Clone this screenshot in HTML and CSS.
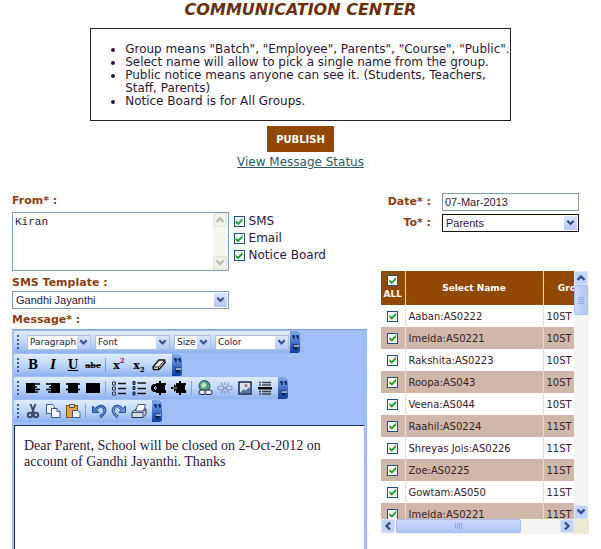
FILE: index.html
```html
<!DOCTYPE html>
<html lang="en">
<head>
<meta charset="utf-8">
<title>Communication Center</title>
<link rel="stylesheet" href="styles.css">
</head>
<body>
<svg class="defs" aria-hidden="true">
  <symbol id="down" viewBox="0 0 10 8"><path d="M1.5 1.5 5 5l3.5-3.5" fill="none" stroke="currentColor" stroke-width="2.4"/></symbol>
  <symbol id="up" viewBox="0 0 10 8"><path d="M1.5 6 5 2.500l3.500 3.500" fill="none" stroke="currentColor" stroke-width="2.400"/></symbol>
  <symbol id="left" viewBox="0 0 8 10"><path d="M6 1.500 2.500 5 6 8.500" fill="none" stroke="currentColor" stroke-width="2.400"/></symbol>
  <symbol id="right" viewBox="0 0 8 10"><path d="M2 1.500 5.500 5 2 8.500" fill="none" stroke="currentColor" stroke-width="2.400"/></symbol>
  <symbol id="more" viewBox="0 0 10 22"><path d="M2 5h2v2H3M6 5h2v2H7" fill="none" stroke="#061f5c" stroke-width="1.500"/><path d="M3 14h5M3 16.500h5L5.500 19Z" fill="#071d50" stroke="#071d50"/><path d="M4 15h5" stroke="#fff"/></symbol>
</svg>
<header class="top">
  <h1>COMMUNICATION CENTER</h1>
  <div class="notes">
    <ul>
      <li>Group means "Batch", "Employee", Parents", "Course", "Public".</li>
      <li>Select name will allow to pick a single name from the group.</li>
      <li>Public notice means anyone can see it. (Students, Teachers, Staff, Parents)</li>
      <li>Notice Board is for All Groups.</li>
    </ul>
  </div>
  <button class="publish" type="submit" form="message-form">PUBLISH</button>
  <a class="status" href="#status">View Message Status</a>
</header>

<form class="form" id="message-form">
  <section class="compose">
    <label class="label" for="from">From* :</label>
    <div class="from-row">
      <div class="from-box">
        <textarea id="from">Kiran</textarea>
        <div class="bar-v pale">
          <button type="button" aria-label="Scroll up"><svg><use href="#up"/></svg></button>
          <button type="button" aria-label="Scroll down"><svg><use href="#down"/></svg></button>
        </div>
      </div>
      <div class="channels">
        <label><input type="checkbox" checked>SMS</label>
        <label><input type="checkbox" checked>Email</label>
        <label><input type="checkbox" checked>Notice Board</label>
      </div>
    </div>
    <label class="label" for="template">SMS Template :</label>
    <div class="pick template">
      <select id="template"><option>Gandhi Jayanthi</option></select>
      <svg><use href="#down"/></svg>
    </div>
    <label class="label" for="message">Message* :</label>
    <div class="editor">
      <div class="toolbar">
        <span class="grip"></span>
        <div class="formats">
          <div class="pick small w-paragraph"><select aria-label="Paragraph"><option>Paragraph</option></select><svg><use href="#down"/></svg></div>
          <div class="pick small w-font"><select aria-label="Font"><option>Font</option></select><svg><use href="#down"/></svg></div>
          <div class="pick small w-size"><select aria-label="Size"><option>Size</option></select><svg><use href="#down"/></svg></div>
          <div class="pick small w-color"><select aria-label="Color"><option>Color</option></select><svg><use href="#down"/></svg></div>
        </div>
        <button class="more" type="button" aria-label="More formats"><svg><use href="#more"/></svg></button>
      </div>
      <div class="toolbar">
        <span class="grip"></span>
        <button class="tool glyph" type="button"><b>B</b></button>
        <button class="tool glyph" type="button"><b><i>I</i></b></button>
        <button class="tool glyph" type="button"><b><u>U</u></b></button>
        <button class="tool glyph strike" type="button"><s>abc</s></button>
        <span class="sep"></span>
        <button class="tool glyph script" type="button">x<sup>2</sup></button>
        <button class="tool glyph script" type="button">x<sub>2</sub></button>
        <button class="tool" type="button" aria-label="Remove formatting"><svg viewBox="0 0 16 16"><path d="M2 10 8 3h5.500l.5 2.500-6 7H2.500Z" fill="#fff" stroke="#111" stroke-width="1.400"/><path d="M2 10h5.500L14 3M7.500 10v2.500" fill="none" stroke="#111"/></svg></button>
        <button class="more" type="button" aria-label="More styles"><svg><use href="#more"/></svg></button>
      </div>
      <div class="toolbar">
        <span class="grip"></span>
        <button class="tool" type="button" aria-label="Align left"><svg viewBox="0 0 16 16"><path d="M1 3h9v10H1Z"/><path d="M1 4h14M1 7h11M1 9.500h14M1 12h12" stroke="#000" stroke-width="1.500"/></svg></button>
        <button class="tool" type="button" aria-label="Align right"><svg viewBox="0 0 16 16"><path d="M6 3h9v10H6Z"/><path d="M1 4h14M4 7h11M1 9.500h14M3 12h12" stroke="#000" stroke-width="1.500"/></svg></button>
        <button class="tool" type="button" aria-label="Center"><svg viewBox="0 0 16 16"><path d="M3 3h10v10H3Z"/><path d="M1 4h14M3 7h10M1 9.500h14M3 12h10" stroke="#000" stroke-width="1.500"/></svg></button>
        <button class="tool" type="button" aria-label="Justify"><svg viewBox="0 0 16 16"><path d="M1 3h14v10H1Z"/></svg></button>
        <span class="sep"></span>
        <button class="tool" type="button" aria-label="Numbered list"><svg viewBox="0 0 16 16"><path d="M7 3.500h8M7 8.500h8M7 13.500h8" stroke="#111" stroke-width="1.600"/><path d="M1.500 2h3v3h-3ZM1.500 7h3v3h-3ZM1.500 12h3v3h-3Z" fill="#cfe0fb" stroke="#234"/></svg></button>
        <button class="tool" type="button" aria-label="Bulleted list"><svg viewBox="0 0 16 16"><path d="M6.500 3h8.500M6.500 8.500h8.500M6.500 13.500h8.500" stroke="#111" stroke-width="1.600"/><path d="M2 1.500h2v3H2ZM2 6.500h2v3H2ZM2 12h2v3H2Z" fill="#789" stroke="#123"/></svg></button>
        <button class="tool" type="button" aria-label="Outdent"><svg viewBox="0 0 16 16"><path d="M5 3h3V1h2v2h5v2h-1v5h1v3h-5v2H8v-2H5Z"/><circle cx="4" cy="8" r="4"/><path d="m5 6-2 2 2 2M3 8h3" fill="none" stroke="#b8cff5"/></svg></button>
        <button class="tool" type="button" aria-label="Indent"><svg viewBox="0 0 16 16"><path d="M5 3h3V1h2v2h5v2h-1v5h1v3h-5v2H8v-2H5Z"/><path d="M0 7h3V4l4 4-4 4V9H0Z"/><path d="M2 8h4" stroke="#b8cff5"/></svg></button>
        <span class="sep"></span>
        <button class="tool" type="button" aria-label="Insert link"><svg viewBox="0 0 16 16"><circle cx="7.500" cy="6" r="5.500" fill="#4e9f86" stroke="#31505e"/><path d="M4 4q3-3 5 0T5 8Z" fill="#c1e8bd"/><rect x="2" y="10" width="7" height="4.500" rx="2" fill="#dce7f5" stroke="#223"/><rect x="8" y="10" width="7" height="4.500" rx="2" fill="#dce7f5" stroke="#223"/></svg></button>
        <button class="tool" type="button" aria-label="Remove link"><svg viewBox="0 0 16 16" fill="none" stroke="#8096bb" stroke-width="1.200"><rect x="1" y="6" width="6" height="4" rx="2"/><rect x="9" y="6" width="6" height="4" rx="2"/><path d="M6 8h4M4 3l2 2M8 2v3M12 3l-2 2M4 13l2-2M8 14v-3M12 13l-2-2"/></svg></button>
        <button class="tool" type="button" aria-label="Insert image"><svg viewBox="0 0 16 16"><path d="M2 2h12v12H2Z" fill="#d6e0f3" stroke="#172747" stroke-width="1.500"/><path d="m3 13 3.500-4 2 1.500L12 7l1 2v4Z" fill="#5873a4"/><circle cx="9" cy="5.500" r="1.500" fill="#b06b70"/></svg></button>
        <button class="tool" type="button" aria-label="Insert rule"><svg viewBox="0 0 16 16"><path d="M2 2.500h2M5 2.500h9M2 5h2M5 5h9M2 11.500h2M5 11.500h9M2 14h2M5 14h9" stroke="#444" stroke-width="1.300"/><path d="M1 7h14v2.500H1Z"/></svg></button>
        <button class="more" type="button" aria-label="More layout"><svg><use href="#more"/></svg></button>
      </div>
      <div class="toolbar">
        <span class="grip"></span>
        <button class="tool" type="button" aria-label="Cut"><svg viewBox="0 0 16 16" fill="none" stroke="#3b4a66" stroke-width="2"><path d="m5.500 1 3.500 9M10.500 1 7 10"/><circle cx="5" cy="12" r="2.200"/><circle cx="11" cy="12" r="2.200"/></svg></button>
        <button class="tool" type="button" aria-label="Copy"><svg viewBox="0 0 16 16" fill="#f5f9ff" stroke="#3a5899"><path d="M1.500 1.500h6l2 2v7h-8Z"/><path d="M6.500 5.500h5.500l3 3v6H6.500Z"/><path d="M12 5.500v3h3"/></svg></button>
        <button class="tool" type="button" aria-label="Paste"><svg viewBox="0 0 16 16"><rect x="1.500" y="2.500" width="11" height="12" fill="#e4a43c" stroke="#76501c"/><path d="M4.500 1.500h5v3h-5Z" fill="#c9d0d9" stroke="#5f5137"/><path d="M7.500 7.500h5l2.500 2v5H7.500Z" fill="#fff" stroke="#3a5899"/></svg></button>
        <span class="sep"></span>
        <button class="tool" type="button" aria-label="Undo"><svg viewBox="0 0 16 16"><path d="M5 6q5-5 8-1t-4 9" fill="none" stroke="#234a9b" stroke-width="3"/><path d="M5 6q5-4 8-1t-4 9" fill="none" stroke="#7ba4ea"/><path d="M1.500 3v6.500H8Z" fill="#4c7bd0" stroke="#234a9b"/></svg></button>
        <button class="tool" type="button" aria-label="Redo"><svg viewBox="0 0 16 16"><path d="M11 6Q6 1 3 5t4 9" fill="none" stroke="#234a9b" stroke-width="3"/><path d="M11 6Q6 2 3 5t4 9" fill="none" stroke="#a6c5f5"/><path d="M14.500 3v6.500H8Z" fill="#6e98df" stroke="#234a9b"/></svg></button>
        <button class="tool" type="button" aria-label="Print"><svg viewBox="0 0 16 16"><path d="m1 9 4-3h10v5l-3 3.500H1Z" fill="#d3d9e5" stroke="#26334e"/><path d="m4.500 8 2.500-6.500h7.500L12.500 8Z" fill="#fff" stroke="#42557c"/><path d="M1 9.500h11L15 6M12 9.500v5" fill="none" stroke="#42557c"/></svg></button>
        <button class="more" type="button" aria-label="More editing"><svg><use href="#more"/></svg></button>
      </div>
      <textarea class="message" id="message">Dear Parent, School will be closed on 2-Oct-2012 on account of Gandhi Jayanthi. Thanks</textarea>
    </div>
  </section>

  <section class="recipients">
    <div class="fields">
      <label class="label" for="date">Date* :</label>
      <input class="date" id="date" type="text" value="07-Mar-2013">
      <label class="label" for="to">To* :</label>
      <div class="pick focus"><select id="to"><option>Parents</option></select><svg><use href="#down"/></svg></div>
    </div>
    <div class="list">
      <div class="view">
        <table>
          <thead><tr><th class="c-check"><label><input type="checkbox" checked>ALL</label></th><th class="c-name">Select Name</th><th class="c-group">Group</th></tr></thead>
          <tbody>
            <tr><td><input type="checkbox" checked aria-label="Aaban"></td><td>Aaban:AS0222</td><td>10ST</td></tr>
            <tr><td><input type="checkbox" checked aria-label="Imelda"></td><td>Imelda:AS0221</td><td>10ST</td></tr>
            <tr><td><input type="checkbox" checked aria-label="Rakshita"></td><td>Rakshita:AS0223</td><td>10ST</td></tr>
            <tr><td><input type="checkbox" checked aria-label="Roopa"></td><td>Roopa:AS043</td><td>10ST</td></tr>
            <tr><td><input type="checkbox" checked aria-label="Veena"></td><td>Veena:AS044</td><td>10ST</td></tr>
            <tr><td><input type="checkbox" checked aria-label="Raahil"></td><td>Raahil:AS0224</td><td>11ST</td></tr>
            <tr><td><input type="checkbox" checked aria-label="Shreyas Jois"></td><td>Shreyas Jois:AS0226</td><td>11ST</td></tr>
            <tr><td><input type="checkbox" checked aria-label="Zoe"></td><td>Zoe:AS0225</td><td>11ST</td></tr>
            <tr><td><input type="checkbox" checked aria-label="Gowtam"></td><td>Gowtam:AS050</td><td>11ST</td></tr>
            <tr><td><input type="checkbox" checked aria-label="Imelda"></td><td>Imelda:AS0221</td><td>11ST</td></tr>
          </tbody>
        </table>
      </div>
      <div class="bar-v">
        <button type="button" aria-label="Scroll up"><svg><use href="#up"/></svg></button>
        <span class="thumb"></span>
        <button class="end" type="button" aria-label="Scroll down"><svg><use href="#down"/></svg></button>
      </div>
      <div class="bar-h">
        <button type="button" aria-label="Scroll left"><svg><use href="#left"/></svg></button>
        <span class="thumb"></span>
        <button class="end" type="button" aria-label="Scroll right"><svg><use href="#right"/></svg></button>
      </div>
      <span class="corner"></span>
    </div>
  </section>
</form>
</body>
</html>
```
FILE: styles.css
```css
* { box-sizing: border-box; }

body {
  margin: 0;
  height: 100vh;
  min-height: 540px;
  display: flex;
  flex-direction: column;
  overflow: hidden;
  background: #fff;
  color: #2a1838;
  font-family: Verdana, "DejaVu Sans", sans-serif;
  font-size: 12px;
  line-height: 13px;
}

button, input, select, textarea { margin: 0; border-radius: 0; font: inherit; color: inherit; }
button { padding: 0; border: 0; background: none; }
.defs { display: none; }

/* Header */
.top { display: flex; flex-direction: column; align-items: center; }
h1 {
  margin: 0;
  padding-bottom: 8px;
  color: #693008;
  font-size: 16px;
  font-style: italic;
  line-height: 20px;
}
.notes { width: 70%; padding: 14px 0 12px; border: 1px solid #222; }
.notes ul { margin: 0; padding-left: 34px; }
.publish {
  margin: 5px 0 4px;
  padding: 0 9px;
  height: 26px;
  background: #914800;
  color: #fff;
  font-size: 10px;
  font-weight: bold;
}
.status { color: #2f5a66; line-height: 13px; }

/* Form */
.form {
  flex: 1;
  min-height: 0;
  display: grid;
  grid-template-columns: 355fr 208fr;
  column-gap: 14px;
  padding: 24px 12px 0;
}
.compose { display: flex; flex-direction: column; min-height: 0; padding-top: 1px; }
.label { color: #8b4012; font-size: 11px; font-weight: bold; line-height: 14px; }
.from-row { display: flex; gap: 5px; margin: 4px 0 5px; }
.from-box { display: flex; width: 61%; height: 59px; border: 1px solid #7f9db9; }
.from-box textarea {
  flex: 1;
  min-width: 0;
  padding: 3px 2px;
  border: 0;
  outline: 0;
  resize: none;
  overflow: hidden;
  font-family: "Liberation Mono", monospace;
  font-size: 11px;
}
.channels { display: flex; flex-direction: column; gap: 4px; padding-top: 3px; }
.channels label { display: flex; align-items: center; gap: 4px; }

input[type="checkbox"] {
  appearance: none;
  flex: none;
  display: block;
  width: 11px;
  height: 11px;
  border: 1px solid #1c5180;
  background: #fff;
}
input[type="checkbox"]:checked::before {
  content: "";
  display: block;
  height: 9px;
  background: #21a121;
  clip-path: polygon(12% 40%, 40% 62%, 88% 12%, 88% 42%, 40% 92%, 12% 68%);
}

/* Drop-downs: the arrow lies over the select's right end */
.pick { position: relative; height: 18px; border: 1px solid #7f9db9; background: #fff; }
.pick select {
  display: block;
  appearance: none;
  width: 100%;
  height: 100%;
  padding: 0 16px 0 3px;
  border: 0;
  outline: 0;
  background: none;
  font-family: "Liberation Sans", sans-serif;
  font-size: 11px;
}
.pick svg {
  position: absolute;
  top: 1px;
  right: 1px;
  width: 13px;
  height: calc(100% - 2px);
  padding: 2px;
  background: linear-gradient(#dbe6fe, #b3c8f8);
  color: #34518a;
  pointer-events: none;
}
.template { width: 61%; margin: 1px 0 4px; }
.focus { border-color: #111; }

/* Editor */
.editor {
  flex: 1;
  min-height: 0;
  display: flex;
  flex-direction: column;
  align-items: flex-start;
  gap: 1px;
  margin-top: 2px;
  padding: 1px 3px 0 2px;
  border-top: 1px solid #7fa2dc;
  background: #9ebef5;
}
.toolbar {
  display: flex;
  align-items: center;
  height: 22px;
  border-radius: 2px 0 0 2px;
  background: linear-gradient(#dfecff, #c0d7fa 50%, #8eb2ef);
}
.grip { width: 2px; height: 14px; margin: 0 4px 0 3px; background: repeating-linear-gradient(#3a5a99 0 2px, transparent 2px 4px); }
.formats { display: flex; gap: 4px; padding: 0 1px 0 4px; }
.small { height: 15px; border-color: #aebfd9; }
.small select { padding: 0 12px 0 2px; font-family: Verdana, "DejaVu Sans", sans-serif; font-size: 9px; line-height: 13px; }
.small svg { top: 0; right: 0; height: 100%; }
.w-paragraph { width: 64px; }
.w-font { width: 75px; }
.w-size { width: 37px; }
.w-color { width: 74px; }
.tool { display: flex; align-items: center; justify-content: center; width: 20px; height: 22px; }
.tool svg { width: 16px; height: 16px; }
.glyph { color: #000; font-family: "DejaVu Serif", serif; font-size: 12px; font-weight: bold; }
.strike { font-size: 8px; }
.script { font-size: 11px; }
.script sup, .script sub { font-size: 7px; line-height: 7px; }
.script sup { align-self: flex-start; padding-top: 3px; color: #a01830; }
.script sub { align-self: flex-end; padding-bottom: 3px; }
.sep { width: 1px; height: 14px; margin: 0 3px 0 2px; background: #7f9fd8; }
.more { width: 10px; height: 22px; margin-left: 3px; border-radius: 0 3px 3px 0; background: linear-gradient(#81a9ee, #3c69c0 60%, #0d3c98); }
.more:first-of-type { margin-left: 0; }
.more svg { display: block; width: 10px; height: 22px; }
.message {
  flex: 1;
  align-self: stretch;
  min-height: 0;
  margin-top: 2px;
  padding: 12px 9px;
  border: solid #1d2b4d;
  border-width: 1px 0 0 1px;
  outline: 0;
  resize: none;
  overflow: hidden;
  font-family: "Liberation Serif", serif;
  font-size: 14px;
  line-height: 16px;
}

/* Recipients */
.fields {
  display: grid;
  grid-template-columns: 50px minmax(0, 1fr);
  gap: 3px 11px;
  align-items: center;
  padding-right: 10px;
  text-align: right;
}
.date {
  width: 100%;
  height: 18px;
  padding: 0 2px;
  border: 1px solid #7f9db9;
  font-family: "Liberation Sans", sans-serif;
  font-size: 11px;
}
.list {
  display: grid;
  grid-template-columns: minmax(0, 1fr) 15px;
  grid-template-rows: 248px 15px;
  margin-top: 39px;
}
.view { overflow: hidden; }
table { width: 222px; table-layout: fixed; border-collapse: collapse; font-size: 10px; color: #35222a; }
th { height: 34px; padding: 0; background: #914800; color: #fff; font-size: 9px; }
th label { display: flex; flex-direction: column; align-items: center; gap: 2px; }
th + th, td + td { border-left: 1px solid #e8dcd4; }
.c-check { width: 24px; }
.c-name { width: 138px; }
td { height: 22px; padding: 0 3px; white-space: nowrap; }
td input[type="checkbox"] { margin: 0 auto; }
tbody tr:nth-child(even) { background: #cfb8aa; }

/* Scroll bars */
.bar-v, .bar-h { display: flex; background: #f6f6f1; color: #34518a; }
.bar-v { flex-direction: column; width: 15px; }
.bar-v button, .bar-h button {
  display: flex;
  align-items: center;
  justify-content: center;
  width: 14px;
  height: 14px;
  border: 1px solid #dce6fb;
  border-radius: 2px;
  background: #c3d4fc;
}
.bar-v svg { width: 10px; height: 8px; }
.bar-h svg { width: 8px; height: 10px; }
.bar-v .thumb, .bar-h .thumb {
  display: flex;
  align-items: center;
  justify-content: center;
  border: 1px solid #a7bdf0;
  border-radius: 2px;
}
.bar-v .thumb { width: 14px; height: 30px; background: linear-gradient(90deg, #cbdafd, #b2c8f8); }
.bar-h .thumb { width: 65%; height: 14px; margin-left: 1px; background: linear-gradient(#cbdafd, #aec5f8); }
.bar-v .thumb::before { content: ""; width: 6px; height: 7px; background: repeating-linear-gradient(#8ea9e6 0 1px, transparent 1px 2px); }
.bar-h .thumb::before { content: ""; width: 7px; height: 6px; background: repeating-linear-gradient(90deg, #8ea9e6 0 1px, transparent 1px 2px); }
.bar-v .end { margin-top: auto; }
.bar-h .end { margin-left: auto; }
.pale { justify-content: space-between; color: #bdbcb3; }
.bar-v.pale button { border-color: #e5e4dc; background: #f1f0e9; }
.corner { background: #ece9d8; }
```
